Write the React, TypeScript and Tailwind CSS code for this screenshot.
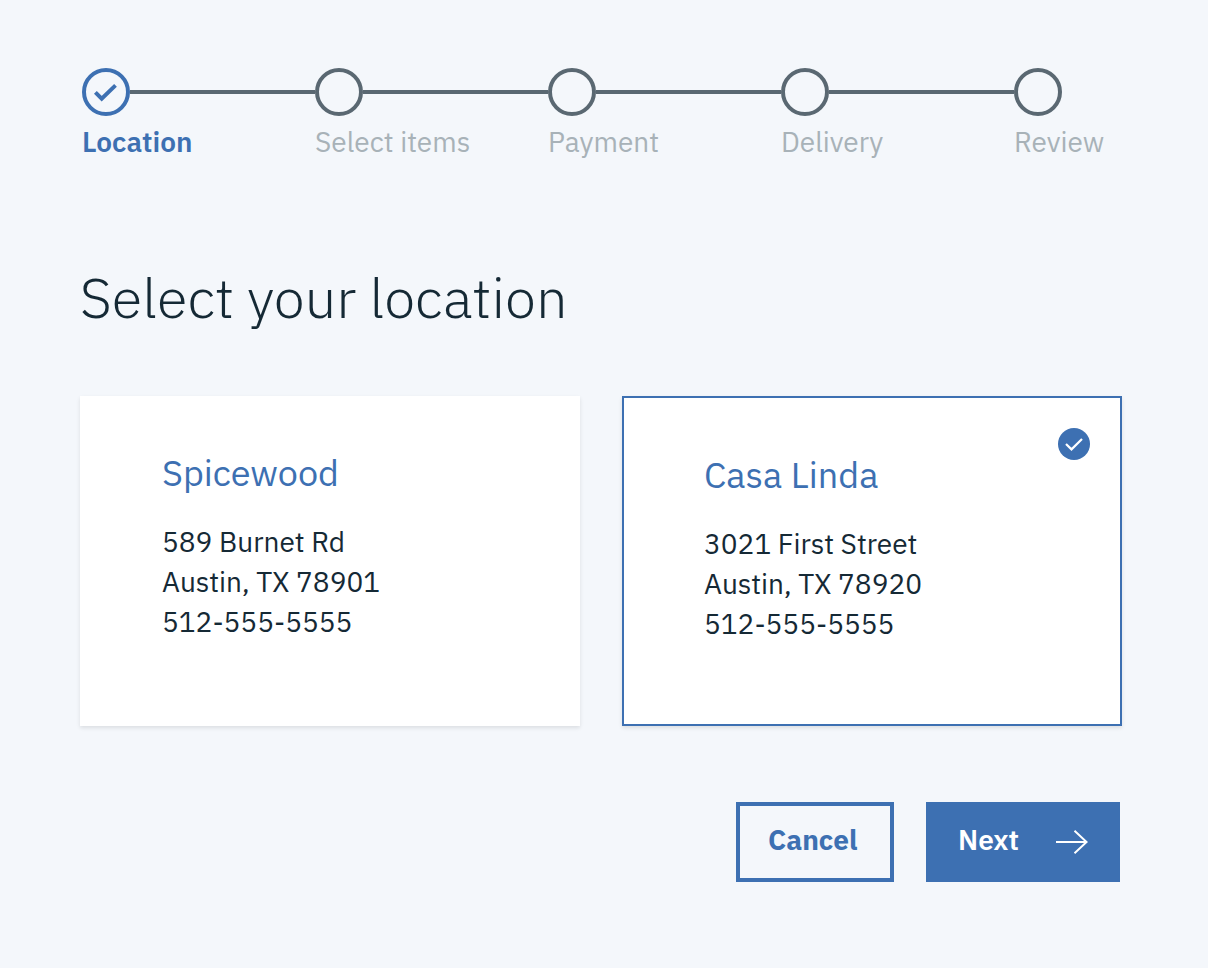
import { useState } from 'react';

const steps = ['Location', 'Select items', 'Payment', 'Delivery', 'Review'];

const locations = [
  { id: 'spicewood', name: 'Spicewood', street: '589 Burnet Rd', city: 'Austin, TX 78901', phone: '512-555-5555' },
  { id: 'casa-linda', name: 'Casa Linda', street: '3021 First Street', city: 'Austin, TX 78920', phone: '512-555-5555' },
];

function StepCircle({ current }: { current: boolean }) {
  return (
    <svg
      aria-hidden="true"
      viewBox="0 0 48 48"
      fill="none"
      className={current ? 'size-12 shrink-0 text-[#3d70b2]' : 'size-12 shrink-0 text-[#5a6872]'}
    >
      <circle cx="24" cy="24" r="22" stroke="currentColor" strokeWidth="4" />
      {current && <path d="M13.4 24.4l6.3 6.2 13.8-13.2" stroke="currentColor" strokeWidth="4" />}
    </svg>
  );
}

function Stepper() {
  return (
    <ol className="ml-0.5 flex">
      {steps.map((step, i) => {
        const last = i === steps.length - 1;
        return (
          <li key={step} aria-current={i === 0 ? 'step' : undefined} className={last ? 'w-[108px]' : 'min-w-0 flex-1'}>
            <div className="flex items-center">
              <StepCircle current={i === 0} />
              {!last && <span className="h-1 flex-1 bg-[#5a6872]" />}
            </div>
            <p
              className={
                i === 0
                  ? 'mt-2 text-[28px] leading-9 font-semibold whitespace-nowrap text-[#3d70b2]'
                  : 'mt-2 text-[28px] leading-9 whitespace-nowrap text-[#a8b2b8]'
              }
            >
              {step}
            </p>
          </li>
        );
      })}
    </ol>
  );
}

export default function App() {
  const [selected, setSelected] = useState('casa-linda');

  return (
    <main className="min-h-screen bg-[#f4f7fb] pt-17 pr-[86px] pb-20 pl-20 font-['IBM_Plex_Sans','Roboto',sans-serif] text-[#152935]">
      <nav aria-label="Progress">
        <Stepper />
      </nav>
      <h1 id="location-heading" className="mt-[101px] text-[56px] leading-[72px] font-light">
        Select your location
      </h1>
      <div role="radiogroup" aria-labelledby="location-heading" className="mt-[63px] grid grid-cols-2 gap-[42px]">
        {locations.map((loc) => {
          const active = loc.id === selected;
          return (
            <label
              key={loc.id}
              className={
                active
                  ? 'relative block cursor-pointer border-2 border-[#3d70b2] bg-white px-20 pt-14 pb-20 shadow-[0_2px_4px_rgba(0,0,0,0.1)]'
                  : 'relative block cursor-pointer bg-white px-[82px] pt-14 pb-20 shadow-[0_2px_4px_rgba(0,0,0,0.1)]'
              }
            >
              <input
                type="radio"
                name="location"
                value={loc.id}
                checked={active}
                onChange={() => setSelected(loc.id)}
                className="sr-only"
              />
              {active && (
                <svg aria-hidden="true" viewBox="0 0 32 32" fill="none" className="absolute top-[30px] right-[30px] size-8">
                  <circle cx="16" cy="16" r="16" fill="#3d70b2" />
                  <path d="M8 16l5.5 5.4L24 11" stroke="white" strokeWidth="2.2" />
                </svg>
              )}
              <span className="block text-4xl leading-[42px] text-[#3d70b2]">{loc.name}</span>
              <span className="mt-7 block text-[28px] leading-10">
                <span className="block">{loc.street}</span>
                <span className="block">{loc.city}</span>
                <span className="block">{loc.phone}</span>
              </span>
            </label>
          );
        })}
      </div>
      <div className="mt-19 mr-0.5 flex justify-end gap-8 text-[28px] leading-9">
        <button type="button" className="h-20 w-[158px] cursor-pointer border-4 border-[#3d70b2] pr-8 pb-1 pl-7 text-left font-bold text-[#3d70b2]">
          Cancel
        </button>
        <button type="button" className="flex h-20 w-[194px] cursor-pointer items-center justify-between bg-[#3d70b2] px-8 font-semibold text-white">
          <span className="pb-1">Next</span>
          <svg aria-hidden="true" viewBox="0 0 32 24" fill="none" className="h-6 w-8">
            <path d="M0 12h31M18.5 .8L30.6 12 18.5 23.2" stroke="white" strokeWidth="2" />
          </svg>
        </button>
      </div>
    </main>
  );
}
